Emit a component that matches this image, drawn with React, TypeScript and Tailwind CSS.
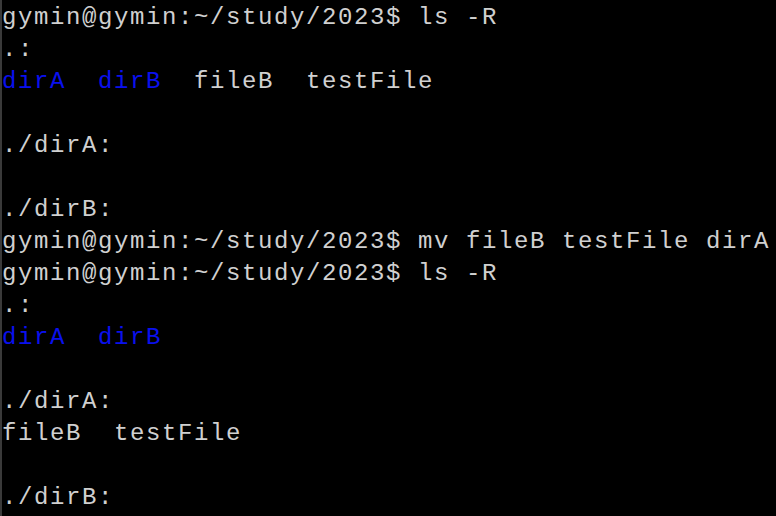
import React from 'react';

type Seg = { text: string; blue?: boolean };

const prompt = 'gymin@gymin:~/study/2023$ ';

const lines: Seg[][] = [
    [{ text: prompt + 'ls -R' }],
    [{ text: '.:' }],
    [{ text: 'dirA', blue: true }, { text: '  ' }, { text: 'dirB', blue: true }, { text: '  fileB  testFile' }],
    [],
    [{ text: './dirA:' }],
    [],
    [{ text: './dirB:' }],
    [{ text: prompt + 'mv fileB testFile dirA' }],
    [{ text: prompt + 'ls -R' }],
    [{ text: '.:' }],
    [{ text: 'dirA', blue: true }, { text: '  ' }, { text: 'dirB', blue: true }],
    [],
    [{ text: './dirA:' }],
    [{ text: 'fileB  testFile' }],
    [],
    [{ text: './dirB:' }],
];

export default function App() {
    return (
        <div className="w-[776px] h-[516px] bg-black overflow-hidden flex">
            <div className="w-[2px] h-full bg-[#3a3a3a] shrink-0" />
            <div className="flex flex-col pt-[2px] font-['Liberation_Mono',monospace] text-[24px] leading-[32px] tracking-[1.6px] text-[#d0d0d0] whitespace-pre">
                {lines.map((line, i) => (
                    <div key={i} className="h-[32px]">
                        {line.map((seg, j) => (
                            <span key={j} className={seg.blue ? 'text-[#0a10ee]' : ''}>
                                {seg.text}
                            </span>
                        ))}
                    </div>
                ))}
            </div>
        </div>
    );
}
